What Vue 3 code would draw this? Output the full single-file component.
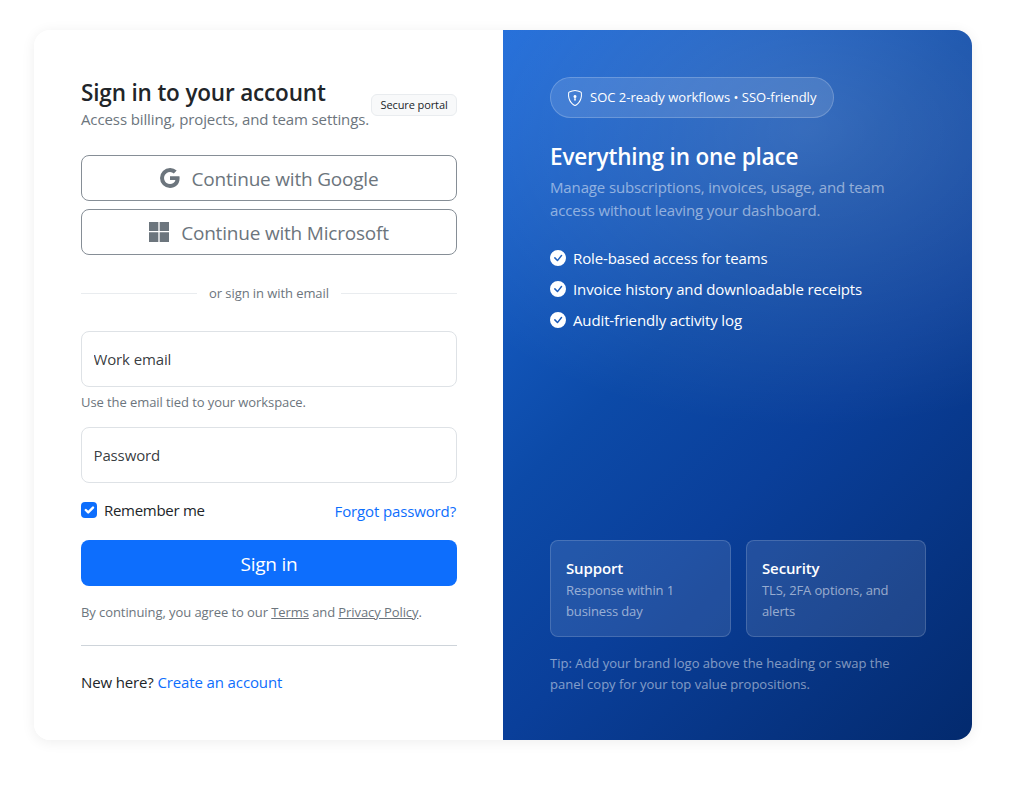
<script setup>
const features = ['Role-based access for teams', 'Invoice history and downloadable receipts', 'Audit-friendly activity log']
const cards = [
  { title: 'Support', text: 'Response within 1 business day' },
  { title: 'Security', text: 'TLS, 2FA options, and alerts' }
]
</script>

<template>
  <main class="page">
    <section class="card">
      <div class="left">
        <header class="head">
          <div class="head-text">
            <h1>Sign in to your account</h1>
            <p>Access billing, projects, and team settings.</p>
          </div>
          <span class="badge">Secure portal</span>
        </header>

        <div class="socials">
          <button class="social" type="button">
            <svg viewBox="0 0 16 16" class="bi"><path d="M15.545 6.558a9.42 9.42 0 0 1 .139 1.626c0 2.434-.87 4.492-2.384 5.885h.002C11.978 15.292 10.158 16 8 16A8 8 0 1 1 8 0a7.689 7.689 0 0 1 5.352 2.082l-2.284 2.284A4.347 4.347 0 0 0 8 3.166c-2.087 0-3.86 1.408-4.492 3.304a4.792 4.792 0 0 0 0 3.063h.003c.635 1.893 2.405 3.301 4.492 3.301 1.078 0 2.004-.276 2.722-.764h-.003a3.702 3.702 0 0 0 1.599-2.431H8v-3.08h7.545z"/></svg>
            <span>Continue with Google</span>
          </button>
          <button class="social" type="button">
            <svg viewBox="0 0 16 16" class="bi"><path d="M7.462 0H0v7.19h7.462V0zM16 0H8.538v7.19H16V0zM7.462 8.211H0V16h7.462V8.211zm8.538 0H8.538V16H16V8.211z"/></svg>
            <span>Continue with Microsoft</span>
          </button>
        </div>

        <div class="divider"><span>or sign in with email</span></div>

        <input class="field" type="email" placeholder="Work email" />
        <p class="help">Use the email tied to your workspace.</p>
        <input class="field" type="password" placeholder="Password" />

        <div class="row">
          <label class="remember">
            <span class="check">
              <svg viewBox="0 0 20 20"><path fill="none" stroke="#fff" stroke-linecap="round" stroke-linejoin="round" stroke-width="3" d="m6 10 3 3 6-6"/></svg>
            </span>
            Remember me
          </label>
          <a class="link forgot" href="#">Forgot password?</a>
        </div>

        <button class="submit" type="button">Sign in</button>

        <p class="terms">By continuing, you agree to our <a href="#">Terms</a> and <a href="#">Privacy Policy</a>.</p>
        <hr />
        <p class="new">New here? <a class="link" href="#">Create an account</a></p>
      </div>

      <aside class="right">
        <div>
          <div class="pill">
            <svg viewBox="0 0 16 16" class="shield"><path d="M5.338 1.59a61.44 61.44 0 0 0-2.837.856.481.481 0 0 0-.328.39c-.554 4.157.726 7.19 2.253 9.188a10.725 10.725 0 0 0 2.287 2.233c.346.244.652.42.893.533.12.057.218.095.293.118a.55.55 0 0 0 .101.025.615.615 0 0 0 .1-.025c.076-.023.174-.061.294-.118.24-.113.547-.29.893-.533a10.726 10.726 0 0 0 2.287-2.233c1.527-1.997 2.807-5.031 2.253-9.188a.48.48 0 0 0-.328-.39c-.651-.213-1.75-.56-2.837-.855C9.552 1.29 8.531 1.067 8 1.067c-.53 0-1.552.223-2.662.524zM5.072.56C6.157.265 7.31 0 8 0s1.843.265 2.928.56c1.11.3 2.229.655 2.887.87a1.54 1.54 0 0 1 1.044 1.262c.596 4.477-.787 7.795-2.465 9.99a11.775 11.775 0 0 1-2.517 2.453 7.159 7.159 0 0 1-1.048.625c-.28.132-.581.24-.829.24s-.548-.108-.829-.24a7.158 7.158 0 0 1-1.048-.625 11.777 11.777 0 0 1-2.517-2.453C1.928 10.487.545 7.169 1.141 2.692A1.54 1.54 0 0 1 2.185 1.43 62.456 62.456 0 0 1 5.072.56z"/><path d="M9.5 6.5a1.5 1.5 0 0 1-1 1.415l.385 1.99a.5.5 0 0 1-.491.595h-.788a.5.5 0 0 1-.49-.595l.384-1.99a1.5 1.5 0 1 1 2-1.415z"/></svg>
            <span class="pill-text">SOC 2-ready workflows • SSO-friendly</span>
          </div>
          <h2>Everything in one place</h2>
          <p class="lead">Manage subscriptions, invoices, usage, and team access without leaving your dashboard.</p>
          <ul>
            <li v-for="f in features" :key="f">
              <svg viewBox="0 0 16 16" class="tick"><path d="M16 8A8 8 0 1 1 0 8a8 8 0 0 1 16 0zm-3.97-3.03a.75.75 0 0 0-1.08.022L7.477 9.417 5.384 7.323a.75.75 0 0 0-1.06 1.06L6.97 11.03a.75.75 0 0 0 1.079-.02l3.992-4.99a.75.75 0 0 0-.01-1.05z"/></svg>
              {{ f }}
            </li>
          </ul>
        </div>
        <div>
          <div class="mini-grid">
            <div v-for="c in cards" :key="c.title" class="mini">
              <strong>{{ c.title }}</strong>
              <span>{{ c.text }}</span>
            </div>
          </div>
          <p class="tip">Tip: Add your brand logo above the heading or swap the panel copy for your top value propositions.</p>
        </div>
      </aside>
    </section>
  </main>
</template>

<style scoped>
.page {
  box-sizing: border-box;
  height: 796px;
  padding: 30px 52px 56px 34px;
  background: #fff;
  font-family: "Open Sans", "Noto Sans", sans-serif;
  font-size: 15px;
  letter-spacing: -0.13px;
  color: #212529;
}
.card {
  display: grid;
  grid-template-columns: 469px 469px;
  height: 710px;
  border-radius: 16px;
  overflow: hidden;
  box-shadow: 0 2px 14px rgba(0, 0, 0, 0.07);
}
.left {
  box-sizing: border-box;
  padding: 48px 46px 0 47px;
  background: #fff;
  display: flex;
  flex-direction: column;
}
.head {
  display: flex;
  justify-content: space-between;
  align-items: center;
  gap: 2px;
}
.head h1 {
  margin: 0;
  font-size: 22.5px;
  line-height: 29px;
  font-weight: 600;
  letter-spacing: -0.16px;
}
.head p {
  margin: 0;
  line-height: 24px;
  color: #6c757d;
  white-space: nowrap;
  letter-spacing: -0.11px;
}
.badge {
  box-sizing: border-box;
  flex: none;
  width: 86px;
  height: 22px;
  line-height: 20px;
  text-align: center;
  border: 1px solid #e9ecef;
  border-radius: 6px;
  background: #f8f9fa;
  font-size: 11px;
  letter-spacing: -0.1px;
  white-space: nowrap;
}
.socials {
  display: flex;
  flex-direction: column;
  gap: 8px;
  margin-top: 24px;
}
.social {
  display: flex;
  align-items: center;
  justify-content: center;
  gap: 12px;
  height: 46px;
  border: 1px solid #868e96;
  border-radius: 8px;
  background: #fff;
  color: #6c757d;
  font: inherit;
  font-size: 19px;
  letter-spacing: -0.2px;
  padding: 0;
}
.social span {
  position: relative;
  top: 1px;
}
.bi {
  width: 20px;
  height: 20px;
  fill: currentColor;
  flex: none;
}
.divider {
  display: flex;
  align-items: center;
  gap: 12px;
  margin-top: 27px;
  height: 22px;
  font-size: 13px;
  letter-spacing: -0.08px;
  color: #6c757d;
}
.divider::before,
.divider::after {
  content: "";
  flex: 1;
  height: 1px;
  background: #e9ecef;
}
.field {
  display: block;
  box-sizing: border-box;
  width: 100%;
  height: 56px;
  padding: 0 12px 0 11.5px;
  border: 1px solid #dee2e6;
  border-radius: 8px;
  background: #fff;
  font: inherit;
  letter-spacing: -0.13px;
  outline: none;
}
.field::placeholder {
  color: rgba(33, 37, 41, 0.9);
  opacity: 1;
}
.divider + .field {
  margin-top: 27px;
}
.help {
  margin: 5px 0 0;
  height: 35px;
  line-height: 20px;
  font-size: 13px;
  letter-spacing: -0.08px;
  color: #6c757d;
}
.row {
  display: flex;
  justify-content: space-between;
  margin-top: 16px;
  height: 33px;
}
.remember {
  display: flex;
  align-items: center;
  gap: 7px;
  height: 22px;
  letter-spacing: -0.28px;
}
.check {
  width: 16px;
  height: 16px;
  border-radius: 4px;
  background: #0d6efd;
  display: block;
}
.check svg {
  display: block;
}
.link {
  color: #0d6efd;
  text-decoration: none;
}
.forgot {
  line-height: 24px;
  margin-right: 1px;
}
.submit {
  display: block;
  width: 100%;
  height: 46px;
  margin-top: 8px;
  border: 0;
  border-radius: 8px;
  background: #0d6efd;
  color: #fff;
  font: inherit;
  font-size: 19px;
  letter-spacing: -0.22px;
  padding: 2px 0 0;
}
.terms {
  margin: 16px 0 0;
  font-size: 13px;
  line-height: 21px;
  letter-spacing: -0.08px;
  color: #6c757d;
}
.terms a {
  color: #6c757d;
}
hr {
  width: 100%;
  margin: 22px 0 0;
  border: 0;
  border-top: 1px solid #ced4da;
}
.new {
  margin: 24px 0 0;
  line-height: 24px;
}
.right {
  box-sizing: border-box;
  padding: 47px 46px 45px 47px;
  color: #fff;
  display: flex;
  flex-direction: column;
  justify-content: space-between;
  background:
    radial-gradient(ellipse 95% 42% at 65% 14%, rgba(255, 255, 255, 0.17), rgba(255, 255, 255, 0) 100%),
    linear-gradient(135deg, #1e6bd9 0%, #0c4aa8 40%, #0a3f9a 60%, #032a6e 100%);
}
.pill {
  display: inline-flex;
  align-items: center;
  gap: 7px;
  box-sizing: border-box;
  height: 41px;
  padding: 0 17px 0 16px;
  border: 1px solid rgba(255, 255, 255, 0.2);
  border-radius: 21px;
  background: rgba(255, 255, 255, 0.12);
  font-size: 13px;
  letter-spacing: 0.01px;
  white-space: nowrap;
}
.pill-text {
  position: relative;
  top: -1px;
}
.shield {
  width: 16px;
  height: 16px;
  fill: #fff;
}
h2 {
  margin: 24px 0 0;
  font-size: 22.5px;
  line-height: 29px;
  font-weight: 600;
  letter-spacing: -0.16px;
}
.lead {
  margin: 5px 0 0;
  line-height: 23px;
  color: rgba(255, 255, 255, 0.5);
}
ul {
  list-style: none;
  margin: 24px 0 0;
  padding: 0;
  display: flex;
  flex-direction: column;
  gap: 7px;
}
li {
  display: flex;
  align-items: center;
  gap: 7px;
  height: 24px;
}
.tick {
  width: 16px;
  height: 16px;
  fill: #fff;
  flex: none;
}
.mini-grid {
  display: grid;
  grid-template-columns: 181px 180px;
  gap: 15px;
}
.mini {
  box-sizing: border-box;
  height: 97px;
  padding: 16px 15px 0;
  border: 1px solid rgba(255, 255, 255, 0.16);
  border-radius: 8px;
  background: rgba(255, 255, 255, 0.1);
}
.mini strong {
  display: block;
  line-height: 23px;
  font-weight: 600;
}
.mini span {
  display: block;
  font-size: 13px;
  line-height: 21px;
  color: rgba(255, 255, 255, 0.55);
}
.tip {
  margin: 16px 0 0;
  font-size: 13px;
  line-height: 21px;
  letter-spacing: 0;
  color: rgba(255, 255, 255, 0.5);
}
</style>
